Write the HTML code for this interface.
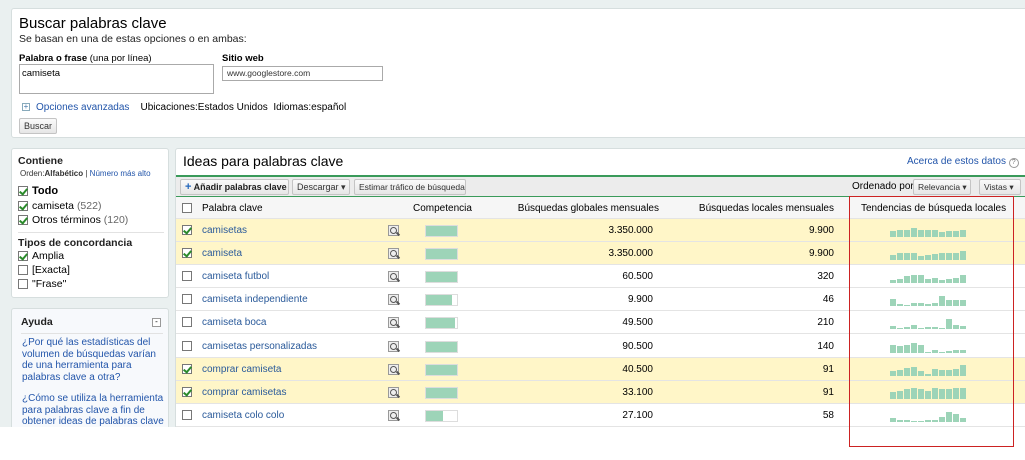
<!DOCTYPE html>
<html><head><meta charset="utf-8">
<style>
*{box-sizing:border-box;margin:0;padding:0}
body{width:1025px;height:460px;background:#fff;font-family:"Liberation Sans",Arial,sans-serif;font-size:11px;color:#000;position:relative;overflow:hidden}
.bg{position:absolute;left:0;top:0;width:1025px;height:427px;background:#eaf0f0}
.abs{position:absolute;white-space:nowrap}
.panel{position:absolute;background:#fff;border:1px solid #d6dede;border-radius:3px}
a,.lnk{color:#2255aa;text-decoration:none}
.cb{position:absolute;width:10px;height:10px;border:1px solid #777;background:#fff}
.cb.on::after{content:"";position:absolute;left:2px;top:0px;width:3px;height:6px;border:solid #2a8a2a;border-width:0 2px 2px 0;transform:rotate(40deg)}
.btn{position:absolute;height:16px;border:1px solid #c4c4c4;background:linear-gradient(#fafafa,#e6e6e6);border-radius:2px;font-size:9px;line-height:14px;padding:0 4px;color:#333;white-space:nowrap}
.row{position:absolute;left:176px;width:849px;height:23px;border-bottom:1px solid #e4e4e4;font-size:10px}
.row.sel{background:#fff6c8}
.row span{position:absolute;top:6px;white-space:nowrap}
.kw{left:26px;color:#2a5a9a}
.num{text-align:right}
.mag{position:absolute;left:212px;top:6px;width:11px;height:11px;border:1px solid #999;background:#eee}
.mag::before{content:"";position:absolute;left:1px;top:1px;width:5px;height:5px;border:1.5px solid #555;border-radius:50%}
.mag::after{content:"";position:absolute;left:7px;top:7px;width:4px;height:2px;background:#555;transform:rotate(45deg)}
.comp{position:absolute;left:249px;top:6px;width:33px;height:12px;background:#fff;border:1px solid #ddd}
.comp i{display:block;height:10px;background:#9dd4b8}
.spark{position:absolute;left:714px;bottom:4px;height:12px;display:flex;align-items:flex-end;gap:1px}
.spark i{display:block;width:6px;background:#9dd4b8}
</style></head><body>
<div class="bg"></div>

<div class="panel" style="left:11px;top:8px;width:1020px;height:130px"></div>
<div class="abs" style="left:19px;top:15px;font-size:15px">Buscar palabras clave</div>
<div class="abs" style="left:19px;top:33px;font-size:10.5px;color:#222">Se basan en una de estas opciones o en ambas:</div>
<div class="abs" style="left:19px;top:53px;font-size:9.5px"><b>Palabra o frase</b> (una por línea)</div>
<div class="abs" style="left:19px;top:64px;width:195px;height:30px;border:1px solid #aaa;font-size:9.5px;padding:3px 2px">camiseta</div>
<div class="abs" style="left:222px;top:53px;font-size:9.5px"><b>Sitio web</b></div>
<div class="abs" style="left:222px;top:66px;width:161px;height:15px;border:1px solid #aaa;font-size:8.5px;padding:1px 4px;color:#333">www.googlestore.com</div>
<div class="abs" style="left:22px;top:103px;width:8px;height:8px;border:1px solid #8ab;font-size:8px;line-height:6px;text-align:center;color:#47a">+</div>
<div class="abs" style="left:36px;top:102px;font-size:10px"><span class="lnk">Opciones avanzadas</span> &nbsp;&nbsp; Ubicaciones:Estados Unidos &nbsp;Idiomas:español</div>
<div class="btn" style="left:19px;top:118px;font-size:9px">Buscar</div>

<div class="panel" style="left:11px;top:148px;width:158px;height:150px"></div>
<div class="abs" style="left:18px;top:155px;font-size:10.5px;font-weight:bold;color:#222">Contiene</div>
<div class="abs" style="left:20px;top:169px;font-size:8px;color:#333">Orden:<b>Alfabético</b> | <span class="lnk">Número más alto</span></div>
<div class="cb on" style="left:18px;top:186px"></div><div class="abs" style="left:32px;top:185px;font-weight:bold;font-size:11px">Todo</div>
<div class="cb on" style="left:18px;top:201px"></div><div class="abs" style="left:32px;top:200px;font-size:10.5px">camiseta <span style="color:#666">(522)</span></div>
<div class="cb on" style="left:18px;top:215px"></div><div class="abs" style="left:32px;top:214px;font-size:10.5px">Otros términos <span style="color:#666">(120)</span></div>
<div class="abs" style="left:18px;top:232px;width:146px;border-top:1px solid #e2e2e2"></div>
<div class="abs" style="left:18px;top:237px;font-size:10.5px;font-weight:bold;color:#222">Tipos de concordancia</div>
<div class="cb on" style="left:18px;top:251px"></div><div class="abs" style="left:32px;top:250px;font-size:10.5px">Amplia</div>
<div class="cb" style="left:18px;top:265px"></div><div class="abs" style="left:32px;top:264px;font-size:10.5px">[Exacta]</div>
<div class="cb" style="left:18px;top:279px"></div><div class="abs" style="left:32px;top:278px;font-size:10.5px">"Frase"</div>

<div class="panel" style="left:11px;top:308px;width:158px;height:130px;background:#f7f9fc"></div>
<div class="abs" style="left:21px;top:316px;font-size:10.5px;font-weight:bold;color:#222">Ayuda</div>
<div class="abs" style="left:152px;top:318px;width:9px;height:9px;border:1px solid #999;background:#fff;font-size:8px;line-height:6px;text-align:center">-</div>
<div class="abs" style="left:21px;top:333px;width:142px;border-top:1px solid #e2e2e2"></div>
<div class="abs lnk" style="left:22px;top:337px;width:145px;font-size:10px;line-height:11.7px;white-space:normal">¿Por qué las estadísticas del volumen de búsquedas varían de una herramienta para palabras clave a otra?</div>
<div class="abs lnk" style="left:22px;top:393px;width:145px;font-size:10px;line-height:11.7px;height:34px;overflow:hidden;white-space:normal">¿Cómo se utiliza la herramienta para palabras clave a fin de obtener ideas de palabras clave y estimaciones de tráfico?</div>

<div class="panel" style="left:175px;top:148px;width:860px;height:290px;border-radius:3px 0 0 0"></div>
<div class="abs" style="left:183px;top:153px;font-size:14px">Ideas para palabras clave</div>
<div class="abs lnk" style="left:907px;top:156px;font-size:10px">Acerca de estos datos <span style="display:inline-block;width:10px;height:10px;border:1px solid #999;border-radius:50%;font-size:7px;line-height:8px;text-align:center;color:#777">?</span></div>
<div class="abs" style="left:176px;top:175px;width:849px;height:22px;background:#ececec;border-top:2px solid #3a9a5a;border-bottom:1px solid #3a9a5a"></div>
<div class="btn" style="left:180px;top:179px;width:109px;font-weight:bold;color:#222"><span style="color:#2266bb;font-size:11px">+</span> Añadir palabras clave</div>
<div class="btn" style="left:292px;top:179px;width:58px">Descargar ▾</div>
<div class="btn" style="left:354px;top:179px;width:112px;font-size:8.5px">Estimar tráfico de búsqueda</div>
<div class="abs" style="left:852px;top:181px;font-size:10px">Ordenado por</div>
<div class="btn" style="left:913px;top:179px;width:58px;font-size:8.5px">Relevancia ▾</div>
<div class="btn" style="left:979px;top:179px;width:42px;font-size:8.5px">Vistas ▾</div>

<div class="row" style="top:197px;height:22px;background:#f6f6f6">
<div class="cb" style="left:6px;top:6px"></div>
<span style="left:26px">Palabra clave</span>
<span style="left:237px">Competencia</span>
<span style="right:366px">Búsquedas globales mensuales</span>
<span style="right:191px">Búsquedas locales mensuales</span>
<span style="left:685px">Tendencias de búsqueda locales</span>
</div>

<div id="rows"></div>

<div class="abs" style="left:849px;top:196px;width:165px;height:251px;border:1px solid #c22"></div>

<script>
var d=[
["camisetas",1,100,"3.350.000","9.900",[6,7,7,9,7,7,7,5,6,6,7]],
["camiseta",1,100,"3.350.000","9.900",[5,7,7,7,4,5,6,7,7,7,9]],
["camiseta futbol",0,100,"60.500","320",[3,4,7,8,8,4,5,3,4,5,8]],
["camiseta independiente",0,85,"9.900","46",[7,2,1,3,3,2,3,10,6,6,6]],
["camiseta boca",0,92,"49.500","210",[3,1,2,4,1,2,2,1,10,4,3]],
["camisetas personalizadas",0,100,"90.500","140",[8,7,8,10,8,1,3,1,2,3,3]],
["comprar camiseta",1,100,"40.500","91",[5,6,8,9,5,2,7,6,6,7,11]],
["comprar camisetas",1,100,"33.100","91",[7,8,10,11,10,8,11,10,10,11,11]],
["camiseta colo colo",0,55,"27.100","58",[4,2,2,1,1,2,2,5,10,8,4]]];
var h="";
d.forEach(function(r,i){
var t=219+i*23.1;
var s=r[5].map(function(v){return '<i style="height:'+v+'px"></i>'}).join("");
h+='<div class="row'+(r[1]?' sel':'')+'" style="top:'+t+'px"><div class="cb'+(r[1]?' on':'')+'" style="left:6px;top:6px"></div><span class="kw">'+r[0]+'</span><div class="mag"></div><div class="comp"><i style="width:'+r[2]+'%"></i></div><span class="num" style="right:372px">'+r[3]+'</span><span class="num" style="right:191px">'+r[4]+'</span><div class="spark">'+s+'</div></div>';
});
document.getElementById("rows").innerHTML=h;
</script>
<div class="abs" style="left:0;top:427px;width:1025px;height:33px;background:#fff"></div>
<div class="abs" style="left:849px;top:427px;width:1px;height:20px;background:#c22"></div>
<div class="abs" style="left:1013px;top:427px;width:1px;height:20px;background:#c22"></div>
<div class="abs" style="left:849px;top:446px;width:165px;height:1px;background:#c22"></div>
</body></html>
